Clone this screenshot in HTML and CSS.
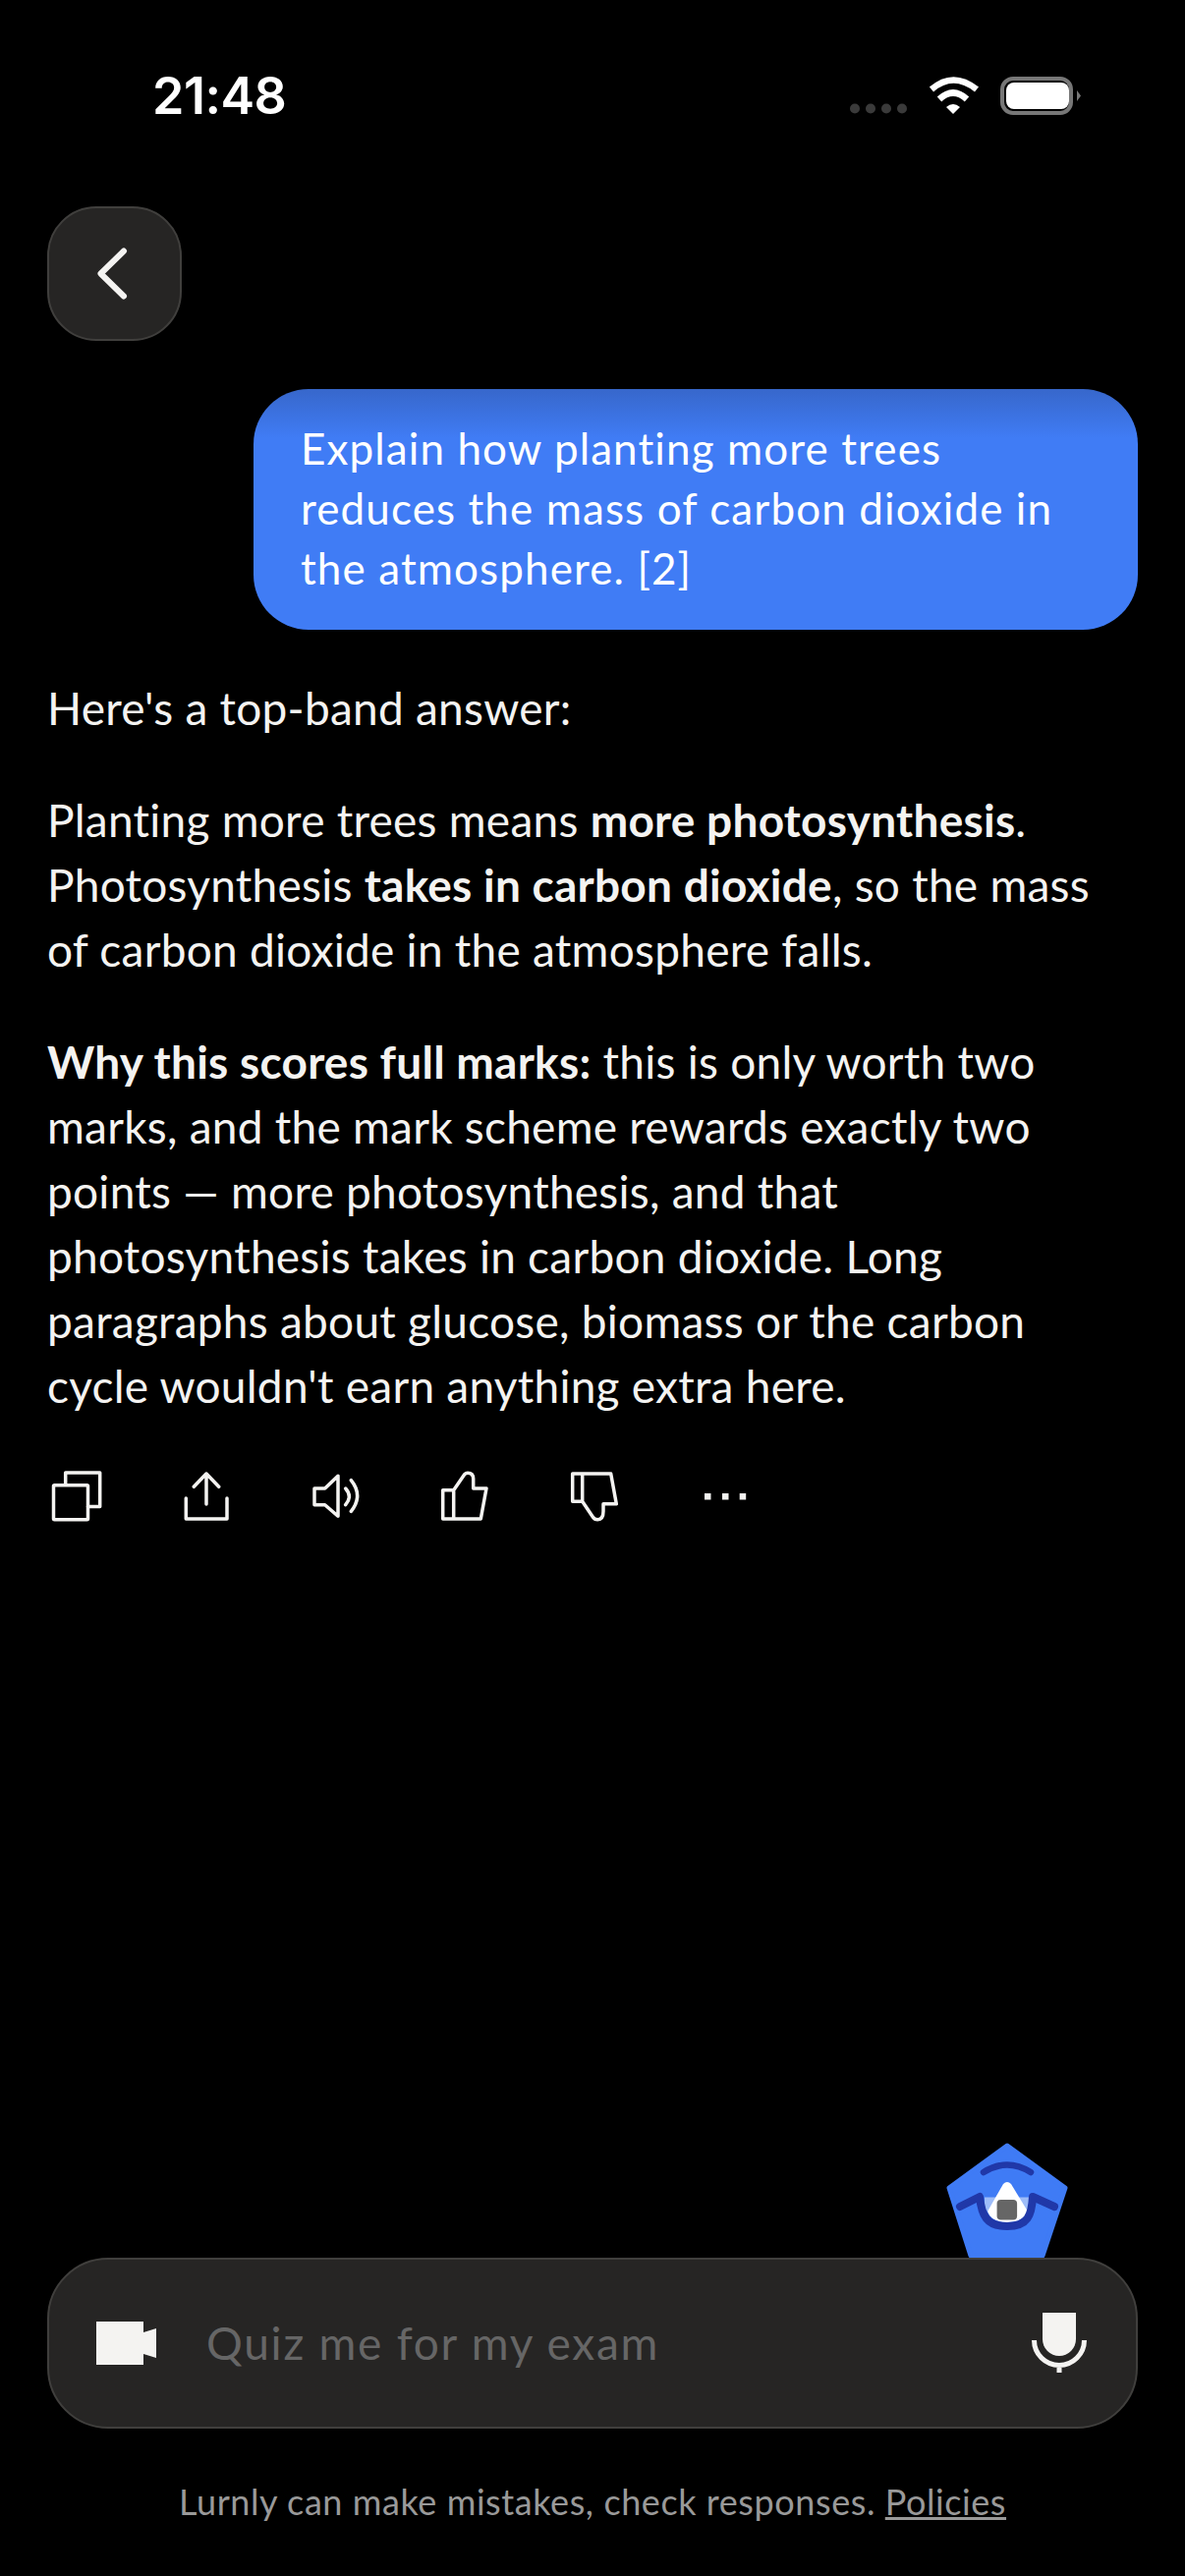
FILE: index.html
```html
<!DOCTYPE html>
<html lang="en">
<head>
<meta charset="utf-8">
<title>Lurnly</title>
<link rel="stylesheet" href="styles.css">
</head>
<body>
<div class="screen">
  <header class="status">
    <span class="time">21:48</span>
    <svg class="status-icons" viewBox="860 70 245 50" width="245" height="50">
      <g fill="#3a3a3a"><circle cx="870" cy="110.500" r="5"/><circle cx="886" cy="110.500" r="5"/><circle cx="902" cy="110.500" r="5"/><circle cx="918" cy="110.500" r="5"/></g>
      <g fill="none" stroke="#fff" stroke-width="6.500">
        <path d="M948 91Q970 72 994 91"/>
        <path d="M956 101Q970 88 984 101"/>
      </g>
      <path fill="#fff" d="M963 109Q970 103 977 109L970 116Z"/>
      <rect x="1020" y="80" width="70" height="35" rx="11" fill="none" stroke="#777" stroke-width="4"/>
      <rect x="1024" y="84" width="64" height="27" rx="8" fill="#fff"/>
      <path fill="#777" d="M1096 92L1100 97.500L1096 103Z"/>
    </svg>
  </header>

  <button class="back" aria-label="Back">
    <svg viewBox="0 0 137 137" width="137" height="137"><path d="M78 45.500L54.500 68.500L78 91.500" fill="none" stroke="#f4f3f1" stroke-width="6" stroke-linecap="round" stroke-linejoin="round"/></svg>
  </button>

  <main class="chat">
    <div class="bubble">Explain how planting more trees reduces the mass of carbon dioxide in the atmosphere. [2]</div>
    <p>Here's a top-band answer:</p>
    <p>Planting more trees means <b>more photosynthesis</b>. Photosynthesis <b>takes in carbon dioxide</b>, so the mass of carbon dioxide in the atmosphere falls.</p>
    <p><b>Why this scores full marks:</b> this is only worth two marks, and the mark scheme rewards exactly two points — more photosynthesis, and that photosynthesis takes in carbon dioxide. Long paragraphs about glucose, biomass or the carbon cycle wouldn't earn anything extra here.</p>
    <div class="actions">
      <svg class="act" viewBox="0 0 56 56"><rect x="4.500" y="16.700" width="35" height="35" rx="1"/><path d="M16.700 16V4H51.700V38.500H39.500"/></svg>
      <svg class="act" viewBox="0 0 56 56"><path d="M15.300 18.300L28 5L40.700 18.300M28 5V36M7.300 30V51H49V30"/></svg>
      <svg class="act" viewBox="0 0 56 56"><path d="M30 7.300V48.300L16.700 36.700H6V20H16.700ZM37.700 20Q45 28.300 37.700 36.700M43.300 11.700Q56 27.500 43.300 43.300"/></svg>
      <svg class="act" viewBox="0 0 56 56"><path d="M15.700 21.700V51M15.700 21.700H4.700V51H43.300L49 20H35.700V10Q35.500 4.300 30 4.300Q28 4.300 26.700 5.700Z"/></svg>
      <svg class="act" viewBox="0 0 56 56"><path d="M14.700 5V33.300M14.700 33.300H4.700V5H43.700L49.300 35.700H36V43.300Q36 51.700 30.300 51.700Q27 51.700 25.300 49Z"/></svg>
      <svg class="act dots" viewBox="0 0 56 56"><rect x="7" y="25" width="6.500" height="6.500"/><rect x="25" y="25" width="6.500" height="6.500"/><rect x="42.700" y="25" width="6.500" height="6.500"/></svg>
    </div>
  </main>

  <div class="composer-wrap">
    <svg class="mascot" viewBox="30 20 130 122" width="130" height="122">
      <path d="M96 25L155 68L132 137H59L37 68Z" fill="#3f7bf5" stroke="#3f7bf5" stroke-width="5" stroke-linejoin="round"/>
      <path d="M72 52Q96 37 120 52" fill="none" stroke="#2038a8" stroke-width="6.500" stroke-linecap="round"/>
      <rect x="73" y="77.500" width="45" height="14" fill="#9dbcf8"/>
      <path d="M92 64Q96 60 100 64L117 92Q112 103 96 103Q80 103 76 92Z" fill="#fff"/>
      <rect x="85.600" y="80" width="20.500" height="20.500" rx="4" fill="#666"/>
      <path d="M48 87L68 77C70 96 75 107 96 107C117 107 121 96 122 77L144 87" fill="none" stroke="#2038a8" stroke-width="8" stroke-linecap="round" stroke-linejoin="round"/>
    </svg>
    <div class="composer">
      <svg class="cam" viewBox="0 0 61 44" width="61" height="44"><path fill="#f4f3f1" d="M0 0H48V44H0ZM48 11L61 7V37L48 33Z"/></svg>
      <span class="placeholder">Quiz me for my exam</span>
      <svg class="mic" viewBox="0 0 56 62" width="56" height="62"><path fill="#f4f3f1" d="M11 0H45V27A17 17 0 0 1 11 27Z"/><path fill="none" stroke="#f4f3f1" stroke-width="5" d="M2.500 28A25.500 25.500 0 0 0 53.500 28M28 53V61"/></svg>
    </div>
  </div>
  <footer class="note">Lurnly can make mistakes, check responses. <u>Policies</u></footer>
</div>
</body>
</html>
```

FILE: styles.css
```css
* { box-sizing: border-box; }
html, body { margin: 0; background: #000; }
.screen {
  width: 1206px;
  height: 2622px;
  display: flex;
  flex-direction: column;
  color: #f4f3f1;
  font-family: "Lato", "Noto Sans", sans-serif;
  overflow: hidden;
}
.status {
  height: 210px;
  display: flex;
  justify-content: space-between;
  align-items: flex-start;
  padding: 71px 101px 0 155px;
}
.status-icons { margin-top: -1px; }
.time {
  font: 600 52px/54px "Inter", sans-serif;
  color: #fff;
  letter-spacing: -0.5px;
}
.status-icons { display: block; }
.back {
  width: 137px;
  height: 137px;
  margin: 0 0 49px 48px;
  padding: 0;
  background: #262524;
  border: 2px solid #403f3d;
  border-radius: 50px;
  display: block;
}
.back svg { display: block; margin: -2px; }
.chat { padding: 0 48px; font-size: 46px; line-height: 66px; letter-spacing: 0.25px; }
.bubble {
  width: 900px;
  margin-left: auto;
  margin-bottom: 47px;
  padding: 30px 48px 32px;
  font-size: 44px;
  line-height: 61px;
  letter-spacing: 1.1px;
  color: #fff;
  border-radius: 56px;
  background: linear-gradient(#3767cb, #407cf5 50px);
}
.chat p { margin: 0 0 48px; }
.chat b { font-weight: 700; }
.actions { display: flex; gap: 76px; padding-left: 2px; margin-top: 51px; }
.act {
  width: 56px;
  height: 56px;
  fill: none;
  stroke: #f4f3f1;
  stroke-width: 3.500;
  stroke-linejoin: round;
  stroke-linecap: round;
}
.dots { fill: #f4f3f1; stroke: none; }
.composer-wrap { position: relative; margin: auto 48px 0; }
.mascot { position: absolute; right: 69px; bottom: 171px; }
.composer {
  position: relative;
  height: 174px;
  display: flex;
  align-items: center;
  padding: 0 50px 0 48px;
  background: #262524;
  border: 2px solid #403f3d;
  border-radius: 62px;
}
.placeholder { margin-left: 51px; margin-top: -2px; font-size: 46px; letter-spacing: 1.75px; color: #666; flex: 1; }
.note {
  height: 150px;
  padding-top: 49px;
  text-align: center;
  font-size: 36px;
  line-height: 50px;
  letter-spacing: 0.58px;
  color: #999;
}
```
